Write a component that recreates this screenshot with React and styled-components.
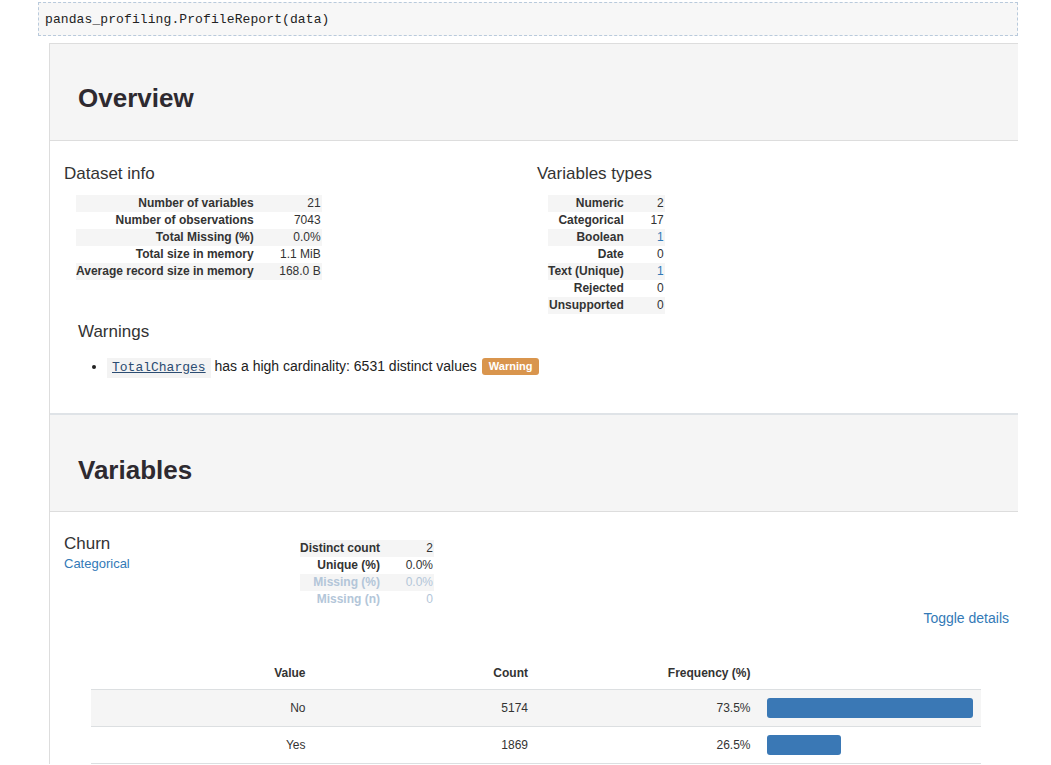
import React from 'react';
import styled, { createGlobalStyle } from 'styled-components';

const GlobalStyle = createGlobalStyle`
  html, body {
    margin: 0;
    padding: 0;
    background: #fff;
    overflow: hidden;
  }
  body {
    font-family: "Liberation Sans", Arial, sans-serif;
    color: #333;
  }
`;

const Page = styled.div`
  width: 980px;
  margin-left: 38px;
  padding-top: 2px;
`;

const CodeCell = styled.div`
  box-sizing: border-box;
  height: 34px;
  display: flex;
  align-items: center;
  padding-left: 6px;
  background: #f7f7f7;
  border: 1px dashed #b9cadc;
  font-family: "Liberation Mono", "Courier New", monospace;
  font-size: 13px;
  letter-spacing: 0.1px;
  color: #222;
`;

const Report = styled.div`
  margin: 7px 0 0 11px;
  border-left: 1px solid #ddd;
  border-top: 1px solid #ddd;
`;

const Section = styled.section`
  border-top: ${p => (p.divided ? '2px solid #dfe3e7' : 'none')};
`;

const SectionHeader = styled.div`
  background: #f5f5f5;
  padding: ${p => p.top}px 28px ${p => p.bottom}px;
  border-bottom: 1px solid #ddd;
`;

const Title = styled.h1`
  margin: 0;
  font-size: 26px;
  line-height: 30px;
  font-weight: bold;
  color: #2e2a30;
`;

const OverviewBody = styled.div`
  padding: 23px 0 35px 0;
`;

const Columns = styled.div`
  display: grid;
  grid-template-columns: 473px 1fr;
  padding-left: 14px;
`;

const SubTitle = styled.h2`
  margin: 0 0 11px;
  font-size: 17px;
  line-height: 20px;
  font-weight: normal;
  color: #333;
`;

const KVTable = styled.table`
  border-collapse: collapse;
  margin-left: ${p => p.indent}px;
  font-size: 12px;

  tr:nth-child(odd) {
    background: #f5f5f5;
  }
`;

const KVRow = styled.tr`
  color: ${p => (p.faded ? '#b3c6d9' : '#333')};
`;

const KVLabel = styled.td`
  height: 17px;
  padding: 0;
  line-height: 17px;
  font-weight: bold;
  text-align: right;
  white-space: nowrap;
`;

const KVValue = styled.td`
  width: ${p => p.width}px;
  padding: 0 1px 0 0;
  line-height: 17px;
  text-align: right;
  white-space: nowrap;
  color: ${p => (p.link ? '#337ab7' : 'inherit')};
`;

const Warnings = styled.div`
  padding-left: 28px;
  margin-top: 8px;
`;

const WarningList = styled.ul`
  margin: 14px 0 0;
  padding-left: 29px;
  list-style: disc;
`;

const WarningItem = styled.li`
  font-size: 14px;
  line-height: 20px;
  color: #222;
`;

const VarCode = styled.code`
  display: inline-block;
  padding: 0 5px;
  background: #f3f3f3;
  font-family: "Liberation Mono", "Courier New", monospace;
  font-size: 13px;
  line-height: 20px;
  color: #2b4c72;
  text-decoration: underline;
`;

const Badge = styled.span`
  display: inline-block;
  padding: 0 7px;
  margin-left: 5px;
  border-radius: 3px;
  background: #d9954d;
  color: #fff;
  font-size: 11px;
  font-weight: bold;
  line-height: 17px;
  vertical-align: 1px;
`;

const VariablesBody = styled.div`
  padding: 22px 0 0;
`;

const VarRow = styled.div`
  display: grid;
  grid-template-columns: 236px auto 1fr;
  padding-left: 14px;
`;

const VarName = styled.div`
  font-size: 17px;
  line-height: 20px;
  color: #333;
`;

const VarType = styled.div`
  font-size: 13px;
  line-height: 20px;
  color: #337ab7;
`;

const VarStats = styled.div`
  padding-top: 6px;
`;

const ToggleRow = styled.div`
  text-align: right;
  padding-right: 9px;
  font-size: 14px;
  line-height: 20px;
  color: #337ab7;
`;

const FreqTable = styled.div`
  width: 890px;
  margin: 28px 0 0 41px;
  font-size: 12px;
`;

const FreqRow = styled.div`
  display: grid;
  grid-template-columns: repeat(4, 1fr);
  align-items: center;
  height: ${p => (p.head ? 33 : 36)}px;
  border-bottom: 1px solid #dcdfe1;
  background: ${p => (p.striped ? '#f5f5f5' : 'transparent')};
  font-weight: ${p => (p.head ? 'bold' : 'normal')};
  color: #333;
`;

const FreqCell = styled.div`
  padding-right: 8px;
  text-align: right;
`;

const BarCell = styled.div`
  padding-left: 8px;
`;

const Bar = styled.div`
  height: 20px;
  border-radius: 3px;
  background: #3a78b5;
`;

const datasetInfo = [
  ['Number of variables', '21'],
  ['Number of observations', '7043'],
  ['Total Missing (%)', '0.0%'],
  ['Total size in memory', '1.1 MiB'],
  ['Average record size in memory', '168.0 B'],
];

const variableTypes = [
  ['Numeric', '2'],
  ['Categorical', '17'],
  ['Boolean', '1', true],
  ['Date', '0'],
  ['Text (Unique)', '1', true],
  ['Rejected', '0'],
  ['Unsupported', '0'],
];

const churnStats = [
  ['Distinct count', '2'],
  ['Unique (%)', '0.0%'],
  ['Missing (%)', '0.0%', true],
  ['Missing (n)', '0', true],
];

const frequencies = [
  { value: 'No', count: 5174, pct: 73.5 },
  { value: 'Yes', count: 1869, pct: 26.5 },
];

const App = () => {
  const maxPct = Math.max(...frequencies.map(f => f.pct));

  return (
    <Page>
      <GlobalStyle />
      <CodeCell>pandas_profiling.ProfileReport(data)</CodeCell>

      <Report>
        <Section>
          <SectionHeader top={39} bottom={27}>
            <Title>Overview</Title>
          </SectionHeader>
          <OverviewBody>
            <Columns>
              <div>
                <SubTitle>Dataset info</SubTitle>
                <KVTable indent={12}>
                  <tbody>
                    {datasetInfo.map(([label, value]) => (
                      <KVRow key={label}>
                        <KVLabel>{label}</KVLabel>
                        <KVValue width={67}>{value}</KVValue>
                      </KVRow>
                    ))}
                  </tbody>
                </KVTable>
              </div>
              <div>
                <SubTitle>Variables types</SubTitle>
                <KVTable indent={11}>
                  <tbody>
                    {variableTypes.map(([label, value, link]) => (
                      <KVRow key={label}>
                        <KVLabel>{label}</KVLabel>
                        <KVValue width={40} link={link}>{value}</KVValue>
                      </KVRow>
                    ))}
                  </tbody>
                </KVTable>
              </div>
            </Columns>

            <Warnings>
              <SubTitle>Warnings</SubTitle>
              <WarningList>
                <WarningItem>
                  <VarCode>TotalCharges</VarCode> has a high cardinality: 6531 distinct values
                  <Badge>Warning</Badge>
                </WarningItem>
              </WarningList>
            </Warnings>
          </OverviewBody>
        </Section>

        <Section divided>
          <SectionHeader top={40} bottom={26}>
            <Title>Variables</Title>
          </SectionHeader>
          <VariablesBody>
            <VarRow>
              <div>
                <VarName>Churn</VarName>
                <VarType>Categorical</VarType>
              </div>
              <VarStats>
                <KVTable indent={0}>
                  <tbody>
                    {churnStats.map(([label, value, faded]) => (
                      <KVRow key={label} faded={faded}>
                        <KVLabel>{label}</KVLabel>
                        <KVValue width={53}>{value}</KVValue>
                      </KVRow>
                    ))}
                  </tbody>
                </KVTable>
              </VarStats>
            </VarRow>
            <ToggleRow>Toggle details</ToggleRow>

            <FreqTable>
              <FreqRow head>
                <FreqCell>Value</FreqCell>
                <FreqCell>Count</FreqCell>
                <FreqCell>Frequency (%)</FreqCell>
                <div />
              </FreqRow>
              {frequencies.map((f, i) => (
                <FreqRow key={f.value} striped={i % 2 === 0}>
                  <FreqCell>{f.value}</FreqCell>
                  <FreqCell>{f.count}</FreqCell>
                  <FreqCell>{f.pct.toFixed(1)}%</FreqCell>
                  <BarCell>
                    <Bar style={{ width: `${(f.pct / maxPct) * 206}px` }} />
                  </BarCell>
                </FreqRow>
              ))}
            </FreqTable>
          </VariablesBody>
        </Section>
      </Report>
    </Page>
  );
};

export default App;
